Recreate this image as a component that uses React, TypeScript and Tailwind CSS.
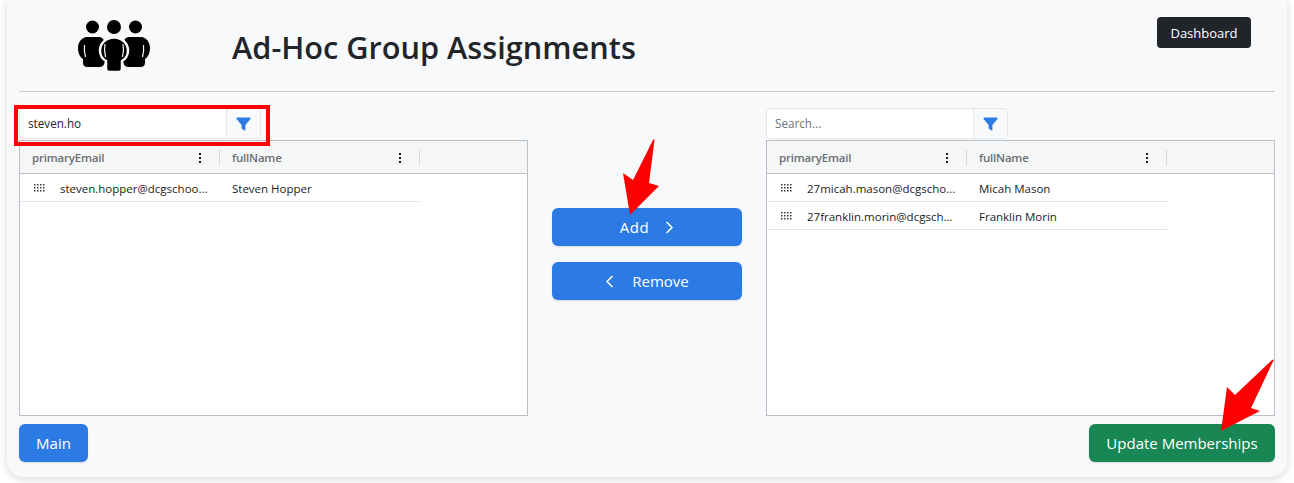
const fontStack = "font-['Open_Sans','Noto_Sans',sans-serif]";

function GroupIcon() {
  return (
    <svg width="72" height="52" viewBox="0 0 72 52" className="block">
      <circle cx="14.500" cy="7" r="6.500" fill="#000" />
      <circle cx="36" cy="7" r="7" fill="#000" />
      <circle cx="57.500" cy="7" r="6.500" fill="#000" />
      <path d="M9 17h12c4 0 6 4 6 10v13c0 4-2 7-5 7H9c-2 0-4-1.500-4-4v-4C2 37 0 33 0 28c0-6 4-11 9-11z" fill="#000" />
      <path d="M63 17H51c-4 0-6 4-6 10v13c0 4 2 7 5 7h13c2 0 4-1.500 4-4v-4c3-2 5-6 5-11 0-6-4-11-9-11z" fill="#000" />
      <path
        d="M36 17.500c8 0 14 6 14 13 0 5-3 9-6 10.500v7.500c0 2-1 3.500-3 3.500H31c-2 0-3-1.500-3-3.500V41c-3-1.500-6-5.500-6-10.500 0-7 6-13 14-13z"
        fill="#000"
        stroke="#f8f9fb"
        strokeWidth="2.500"
      />
      <path d="M27 24c-1 5-.5 9 .5 13M45 24c1 5 .5 9-.5 13M6.500 25c-.5 4 0 8 1 12M65.500 25c.5 4 0 8-1 12" stroke="#f8f9fb" strokeWidth="1.200" fill="none" />
    </svg>
  );
}

function FilterIcon() {
  return (
    <svg width="15" height="14" viewBox="0 0 16 14">
      <path d="M.5 1.200C.5.500 1 0 1.700 0h12.600c.7 0 1.200.5 1.200 1.200 0 .3-.1.600-.3.800L10 8v5.300c0 .5-.7.900-1.100.5L6.400 12c-.3-.2-.4-.4-.4-.8V8L.8 2c-.2-.2-.3-.5-.3-.8z" fill="#2c7be5" />
    </svg>
  );
}

function DotsIcon() {
  return (
    <span className="flex flex-col items-center gap-[2px]">
      <span className="h-[2px] w-[2px] bg-[#181d1f]" />
      <span className="h-[2px] w-[2px] bg-[#181d1f]" />
      <span className="h-[2px] w-[2px] bg-[#181d1f]" />
    </span>
  );
}

function GripIcon() {
  return (
    <svg width="12" height="9" viewBox="0 0 12 9" className="block">
      {[0, 3, 6].map((y) =>
        [0, 3, 6, 9].map((x) => <rect key={`${x}-${y}`} x={x} y={y} width="1.500" height="1.500" fill="#33373b" />)
      )}
    </svg>
  );
}

function SearchBar({ value }: { value?: string }) {
  return (
    <div className="flex h-[31px] w-[242px] overflow-hidden rounded-[4px] border border-[#e4e7ec] bg-white">
      <div className={`flex flex-1 items-center px-2 text-[11.7px] ${value ? "text-[#212529]" : "text-[#6c757d]"}`}>
        {value ?? "Search..."}
      </div>
      <div className="flex w-[34px] items-center justify-center border-l border-[#e4e7ec] bg-[#f8f9fb]">
        <FilterIcon />
      </div>
    </div>
  );
}

function Grid({ rows }: { rows: { email: string; name: string }[] }) {
  return (
    <div className="h-[276px] border border-[#babfc7] bg-white text-[11.5px] text-[#181d1f]">
      <div className="flex h-[33px] items-center border-b border-[#babfc7] bg-[#f5f7f7] pt-[2px] font-semibold tracking-[-0.2px] text-[#6b6f73]">
        <div className="flex h-[16px] w-[200px] items-center justify-between border-r border-[#d5d8dc] pl-3 pr-[18px]">
          <span>primaryEmail</span>
          <DotsIcon />
        </div>
        <div className="flex h-[16px] w-[200px] items-center justify-between border-r border-[#d5d8dc] pl-3 pr-[18px]">
          <span>fullName</span>
          <DotsIcon />
        </div>
      </div>
      {rows.map((r) => (
        <div key={r.email} className="flex h-[28px] w-[400px] items-center border-b border-[#dde2eb] pt-[2px]">
          <div className="flex w-[200px] items-center pl-[14px]">
            <GripIcon />
            <span className="ml-[14px] whitespace-nowrap">{r.email}</span>
          </div>
          <div className="pl-3">{r.name}</div>
        </div>
      ))}
    </div>
  );
}

function Chevron({ dir }: { dir: "left" | "right" }) {
  return (
    <svg width="9" height="13" viewBox="0 0 9 13" fill="none" stroke="#fff" strokeWidth="1.500">
      <path d={dir === "right" ? "M1.500 1l5.500 5.500L1.500 12" : "M7.500 1L2 6.500 7.500 12"} />
    </svg>
  );
}

const btn = "flex h-[38px] items-center justify-center rounded-[6px] text-[15px] text-white shadow-[0_1px_2px_rgba(0,0,0,0.12)]";

export default function App() {
  return (
    <div className={`relative h-[483px] w-[1294px] overflow-hidden bg-white ${fontStack}`}>
      <div className="mx-[7px] h-[477px] rounded-b-[16px] bg-[#f8f9fb] px-3 shadow-[0_2px_8px_rgba(0,0,0,0.16)]">
        <header className="relative flex h-[92px] border-b border-[#c9cbcf]">
          <div className="ml-[59px] mt-[20px]">
            <GroupIcon />
          </div>
          <h1 className="ml-[82px] mt-[26px] text-[30.7px] leading-[42px] font-semibold text-[#212529]">
            Ad-Hoc Group Assignments
          </h1>
          <div className="ml-auto mr-6 mt-[17px]">
            <div className="flex h-[31px] w-[94px] items-center justify-center rounded-[4px] bg-[#212529] pt-[2px] text-[13px] text-white">
              Dashboard
            </div>
          </div>
        </header>

        <div className="flex pt-4">
          <section className="w-[509px]">
            <SearchBar value="steven.ho" />
            <div className="mt-[1px]">
              <Grid rows={[{ email: "steven.hopper@dcgschoo...", name: "Steven Hopper" }]} />
            </div>
          </section>
          <div className="flex w-[238px] flex-col gap-4 px-6 pt-[100px]">
            <div className={`${btn} gap-4 bg-[#2c7be5]`}>
              <span className="tracking-[0.5px]">Add</span> <Chevron dir="right" />
            </div>
            <div className={`${btn} gap-[18px] bg-[#2c7be5]`}>
              <Chevron dir="left" /> Remove
            </div>
          </div>
          <section className="w-[509px]">
            <SearchBar />
            <div className="mt-[1px]">
              <Grid
                rows={[
                  { email: "27micah.mason@dcgscho...", name: "Micah Mason" },
                  { email: "27franklin.morin@dcgsch...", name: "Franklin Morin" },
                ]}
              />
            </div>
          </section>
        </div>

        <div className="mt-2 flex justify-between">
          <div className={`${btn} w-[69px] bg-[#2c7be5]`}>Main</div>
          <div className={`${btn} w-[186px] bg-[#198754]`}>Update Memberships</div>
        </div>
      </div>

      {/* annotations drawn over the screenshot */}
      <div className="absolute left-[14px] top-[105px] h-[41px] w-[256px] border-[4px] border-[#ff0000]" />
      <svg className="absolute left-[620px] top-[137px]" width="40" height="80" viewBox="0 0 40 80">
        <path d="M3 36l10 7L33 3c.6-1 1.500-1 1.500 0L29 46l10 3-29 29z" fill="#ff0000" />
      </svg>
      <svg className="absolute left-[1215px] top-[357px]" width="60" height="80" viewBox="0 0 60 80">
        <path d="M12 30l8 8L57 3c1-1 2-.5 1.500.5L36 51l9 3-39 20z" fill="#ff0000" />
      </svg>
    </div>
  );
}
